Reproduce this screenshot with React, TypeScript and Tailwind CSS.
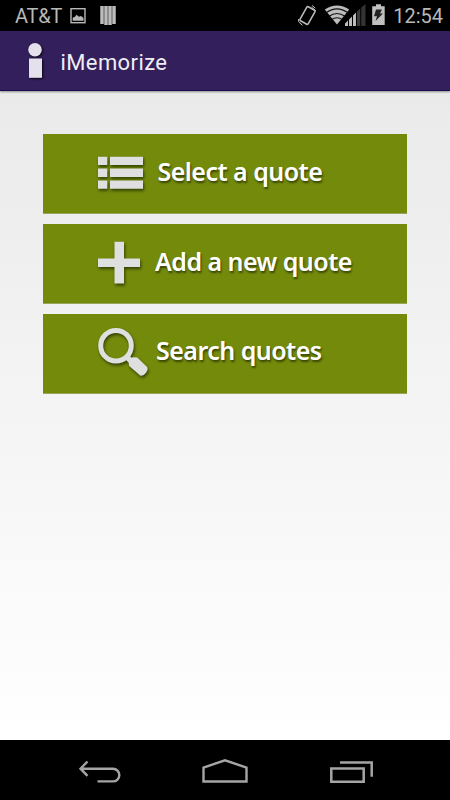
import React from "react";

const shadow = "drop-shadow-[1.5px_2px_1.5px_rgba(30,40,0,0.75)]";

function StatusBar() {
  return (
    <div className="flex h-[31px] shrink-0 items-center bg-black pl-[15px] pr-[7px] text-[#b8b8b8]">
      <span className="w-[55px] whitespace-nowrap pt-[2px] text-[20px] leading-[31px] tracking-[-0.2px]">AT&amp;T</span>
      <svg className="h-[31px] w-[50px]" viewBox="70 0 50 31" fill="none">
        <rect x="71" y="8.7" width="14" height="14" stroke="#b8b8b8" strokeWidth="1.4" />
        <path d="M72.7 20.7v-3l2.3-1 1.5-2 2.5 2 2-.8 2.5 2v2.8z" fill="#b8b8b8" />
        <path d="M102 6v18M106 6v19M110 6v19M114 6v18" stroke="#bdbdbd" strokeWidth="3.5" />
      </svg>
      <svg className="ml-auto h-[31px] w-[92px] shrink-0" viewBox="296 0 92 31" fill="none">
        {/* rotated phone */}
        <rect x="302.8" y="7.5" width="9.4" height="16" rx="1.2" transform="rotate(29 307.5 15.5)" stroke="#b8b8b8" strokeWidth="1.6" />
        <path d="M298.6 19l-.1 2.5 3 2.6M299.5 22.8l3 2.6M312 5.3l3.3 2.9M311.5 7l4.5 4" stroke="#b8b8b8" strokeWidth="1" />
        {/* wifi */}
        <path d="M324.8 9.5q12.2-8.2 24.4 0L337 24.6z" fill="#bdbdbd" />
        <g stroke="#111" strokeWidth="1.1">
          <path d="M326 12.8q11-7.8 22 0" />
          <path d="M329 16.3q8-5.6 16 0" />
          <path d="M331.5 19.6q5.5-3.8 11 0" />
        </g>
        {/* signal strength */}
        <path d="M345 26v-2.5l3-3V26zM349 26v-6.5l3-3V26zM353 26V15.5l3-3V26z" fill="#bdbdbd" />
        <path d="M357 26V11.5l3.2-3V26z" fill="#3c3c3c" />
        <path d="M361.2 26V7.5l4.3-3.5V26z" fill="#333" />
        {/* battery */}
        <path d="M376 4.2h5v2h3.7v18.7h-12.5V6.2h3.8z" fill="#c0c0c0" />
        <path d="M376 9.5l6 0-2 4h3l-7.5 7.5 1.5-4.8h-3z" fill="#222" />
      </svg>
      <span className="ml-[5px] pt-[2px] text-right text-[20px] leading-[31px]">12:54</span>
    </div>
  );
}

function TitleBar() {
  return (
    <div className="relative flex h-[60px] shrink-0 items-center border-b border-[#170c50] bg-[#321f5b] shadow-[0_1px_2px_rgba(0,0,0,0.4)]">
      <svg className="ml-6 h-[60px] w-6 drop-shadow-[1.5px_1.5px_1px_rgba(0,0,0,0.8)]" viewBox="24 31 24 60" fill="#e4e0ec">
        <circle cx="35" cy="49.8" r="6.8" />
        <rect x="29" y="58.5" width="13" height="19.3" />
      </svg>
      <h1 className="ml-[12.5px] pt-[4px] text-[22px] font-normal leading-none tracking-[0.4px] text-[#efedf3]">iMemorize</h1>
    </div>
  );
}

const iconClass = `ml-[52px] h-20 w-14 shrink-0 ${shadow}`;

const ListIcon = () => (
  <svg className={iconClass} viewBox="95 0 56 80" fill="#dfdfdf">
    <path d="M98 22.7h9.3V31H98zM98 34.5h9.3V43H98zM98 46.4h9.3v8.3H98zM110 22.7h33V31h-33zM110 34.5h33V43h-33zM110 46.4h33v8.3h-33z" />
  </svg>
);

const PlusIcon = () => (
  <svg className={iconClass} viewBox="95 0 56 80" fill="#dfdfdf">
    <path d="M114.5 17.8h9.5v16.6h16V43h-16v16.6h-9.5V43H98v-8.6h16.5z" />
  </svg>
);

const SearchIcon = () => (
  <svg className={iconClass} viewBox="95 0 56 80" fill="none" stroke="#dfdfdf">
    <circle cx="116" cy="31.7" r="15.3" strokeWidth="5" />
    <path d="M126 42l5 5.2" strokeWidth="5.5" />
    <path d="M128.7 49.5l.8-3.8 3.2-2.4 4.6.2 9.8 9.4q1.3 2.2-.8 5.4-2.4 3.6-5.8 3.5l-11.3-9.9z" fill="#dfdfdf" stroke="none" />
  </svg>
);

const actions = [
  { label: "Select a quote", icon: ListIcon, text: "ml-[6.5px] pb-[5px]" },
  { label: "Add a new quote", icon: PlusIcon, text: "ml-[4px] pb-[5px]" },
  { label: "Search quotes", icon: SearchIcon, text: "ml-[5px] pb-[7px]" },
];

function NavBar() {
  return (
    <div className="flex h-[60px] shrink-0 items-center justify-between bg-black pl-[75px] pr-[74px]">
      <svg className="h-[60px] w-[50px]" viewBox="75.5 740 50 60" fill="none" stroke="#a5a5a5" strokeWidth="2.4">
        <path d="M81 768.7h32.5a6.3 6.3 0 0 1 0 12.7H98M88 761.5l-7 7.2 7 7.2" />
      </svg>
      <svg className="h-[60px] w-[50px]" viewBox="201 740 50 60" fill="none" stroke="#a5a5a5" strokeWidth="2.4">
        <path d="M203.5 781.5v-14l21.5-7.2 21.5 7.2v14z" />
      </svg>
      <svg className="h-[60px] w-[50px]" viewBox="326 740 50 60" fill="none" stroke="#a5a5a5" strokeWidth="2.5">
        <path d="M331.3 768.5h32.4v13.2h-32.4zM340 762.5h31.7v14.3" />
      </svg>
    </div>
  );
}

export default function App() {
  return (
    <div className="flex h-[800px] w-[450px] flex-col overflow-hidden font-[Roboto,sans-serif]">
      <StatusBar />
      <TitleBar />
      <main className="flex flex-1 flex-col gap-[10px] bg-linear-to-b from-[#eaeaea] to-white px-[43px] pt-[43px]">
        {actions.map(({ label, icon: Icon, text }) => (
          <button key={label} className="flex h-20 items-center border-b border-[#98a65b] bg-[#738a0b] text-left">
            <Icon />
            <span
              className={`whitespace-nowrap font-['Noto_Sans',sans-serif] text-[25px] font-semibold leading-none tracking-[-0.53px] text-white [text-shadow:1px_2px_2px_rgba(30,40,0,0.7)] ${text}`}
            >
              {label}
            </span>
          </button>
        ))}
      </main>
      <NavBar />
    </div>
  );
}
